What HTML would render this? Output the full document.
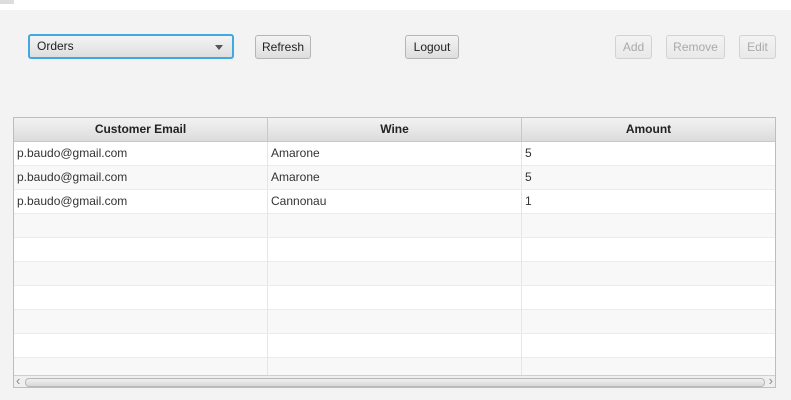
<!DOCTYPE html>
<html><head><style>
body{margin:0;width:791px;height:400px;background:#f3f3f3;font-family:"Liberation Sans",sans-serif;font-size:12px;position:relative;overflow:hidden;color:#333}
.top{position:absolute;left:0;top:0;width:791px;height:10px;background:#fff}
.b{position:absolute;box-sizing:border-box;border:1px solid #b5b5b5;border-radius:3px;background:linear-gradient(#f4f4f4,#dedede);text-align:center;line-height:22px;height:24px;color:#222}
.d{color:#aaa;border-color:#d2d2d2;background:linear-gradient(#f3f3f3,#e9e9e9)}
.t{position:absolute;left:13px;top:117px;width:763px;height:271px;box-sizing:border-box;border:1px solid #bdbdbd;background:#fff;overflow:hidden}
.r{position:absolute;left:0;width:761px;height:24px;box-sizing:border-box;border-bottom:1px solid #ececec}
.c{position:absolute;top:0;height:24px;line-height:23px;padding-left:3px;box-sizing:border-box;border-right:1px solid #e6e6e6}
.r .c:nth-child(3){border-right:0}
.h{background:linear-gradient(#f2f2f2,#dcdcdc);font-weight:bold;text-align:center;border-bottom:1px solid #c8c8c8;color:#222}
.h .c{padding:0;border-right:1px solid #c8c8c8}
</style></head><body>
<div class="top"></div>
<div style="position:absolute;left:0;top:0;width:14px;height:4px;background:#ddd"></div>
<div class="b" style="left:28px;top:34px;width:206px;height:25px;border:2px solid #3fa9e0;text-align:left;padding-left:7px;line-height:21px">Orders<span style="position:absolute;right:9px;top:9px;border:4px solid transparent;border-top:5px solid #555;border-bottom:0"></span></div>
<div class="b" style="left:255px;top:35px;width:56px">Refresh</div>
<div class="b" style="left:405px;top:35px;width:54px">Logout</div>
<div class="b d" style="left:615px;top:35px;width:37px">Add</div>
<div class="b d" style="left:666px;top:35px;width:59px">Remove</div>
<div class="b d" style="left:739px;top:35px;width:37px">Edit</div>
<div class="t">
<div class="r h" style="top:0;height:24px"><div class="c" style="left:0;width:254px">Customer Email</div><div class="c" style="left:254px;width:254px">Wine</div><div class="c" style="left:508px;width:253px;border:0">Amount</div></div>
<div class="r" style="top:24px"><div class="c" style="left:0;width:254px">p.baudo@gmail.com</div><div class="c" style="left:254px;width:254px">Amarone</div><div class="c" style="left:508px;width:253px">5</div></div>
<div class="r" style="top:48px;background:#f8f8f8"><div class="c" style="left:0;width:254px">p.baudo@gmail.com</div><div class="c" style="left:254px;width:254px">Amarone</div><div class="c" style="left:508px;width:253px">5</div></div>
<div class="r" style="top:72px"><div class="c" style="left:0;width:254px">p.baudo@gmail.com</div><div class="c" style="left:254px;width:254px">Cannonau</div><div class="c" style="left:508px;width:253px">1</div></div>
<div class="r" style="top:96px;background:#f8f8f8"><div class="c" style="left:0;width:254px"></div><div class="c" style="left:254px;width:254px"></div></div>
<div class="r" style="top:120px"><div class="c" style="left:0;width:254px"></div><div class="c" style="left:254px;width:254px"></div></div>
<div class="r" style="top:144px;background:#f8f8f8"><div class="c" style="left:0;width:254px"></div><div class="c" style="left:254px;width:254px"></div></div>
<div class="r" style="top:168px"><div class="c" style="left:0;width:254px"></div><div class="c" style="left:254px;width:254px"></div></div>
<div class="r" style="top:192px;background:#f8f8f8"><div class="c" style="left:0;width:254px"></div><div class="c" style="left:254px;width:254px"></div></div>
<div class="r" style="top:216px"><div class="c" style="left:0;width:254px"></div><div class="c" style="left:254px;width:254px"></div></div>
<div class="r" style="top:240px;background:#f8f8f8"><div class="c" style="left:0;width:254px"></div><div class="c" style="left:254px;width:254px"></div></div>
<div style="position:absolute;left:0;top:257px;width:761px;height:12px;background:#efefef;border-top:1px solid #cfcfcf">
<span style="position:absolute;left:2px;top:-3px;color:#888;font-size:13px">‹</span>
<div style="position:absolute;left:11px;top:2px;width:738px;height:7px;border:1px solid #b8b8b8;border-radius:4px;background:linear-gradient(#f0f0f0,#d8d8d8)"></div>
<span style="position:absolute;right:2px;top:-3px;color:#888;font-size:13px">›</span>
</div>
</div>
</body></html>
